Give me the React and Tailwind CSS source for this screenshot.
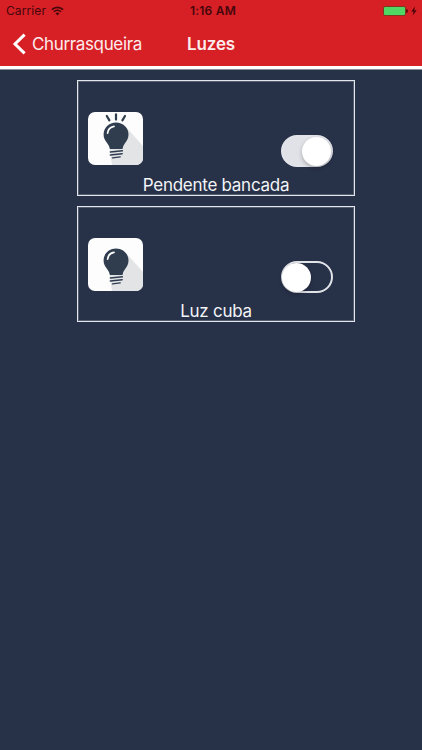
import React, { useState } from 'react';

const initialLights = [
  { id: 'bancada', name: 'Pendente bancada', on: true },
  { id: 'cuba', name: 'Luz cuba', on: false },
];

function WifiIcon() {
  return (
    <svg className="ml-[5px] w-[13px] h-[10px]" viewBox="0 0 13 10" fill="none">
      <path d="M0.9 3.6 A8 8 0 0 1 12.1 3.6" stroke="#45070b" strokeWidth="1.7" />
      <path d="M2.9 5.8 A5.1 5.1 0 0 1 10.1 5.8" stroke="#45070b" strokeWidth="1.5" />
      <path d="M4.5 7.3 A3 3 0 0 1 8.5 7.3 L6.5 9.5 Z" fill="#45070b" />
    </svg>
  );
}

function StatusBar() {
  return (
    <div className="h-[22px] grid grid-cols-3 items-center text-[12px] text-[#45070b]">
      <div className="pl-[6px] flex items-center tracking-[0.1px]">
        Carrier
        <WifiIcon />
      </div>
      <div className="pl-[4px] text-center font-semibold tracking-[0.2px]">1:16 AM</div>
      <div className="pr-[5px] flex items-center justify-end">
        <div className="w-[23px] h-[10px] border border-[#7d3a20] rounded-[2px] bg-[#4fd964]" />
        <div className="w-[2px] h-[4px] rounded-r-full bg-[#5e0a0e]" />
        <svg className="ml-[3px] w-[6px] h-[10px]" viewBox="0 0 6 10">
          <path d="M4 0.5 L0.3 5.6 H2.6 L1.7 9.5 L5.7 4.2 H3.3 Z" fill="#45070b" />
        </svg>
      </div>
    </div>
  );
}

function NavBar() {
  return (
    <div className="h-11 grid grid-cols-[1fr_auto_1fr] items-center text-[17px] leading-[22px]">
      <button className="pl-[12px] pb-[1px] flex items-center text-[#fdecec]">
        <svg className="w-[14px] h-[22px]" viewBox="0 0 14 22" fill="none">
          <path d="M12.6 1.6 L3 11 L12.6 20.4" stroke="#ffffff" strokeWidth="3" />
        </svg>
        <span className="ml-[6px] tracking-[-0.36px]">Churrasqueira</span>
      </button>
      <h1 className="pb-[1px] font-semibold text-[#fdecec] tracking-[-0.1px]">Luzes</h1>
      <div />
    </div>
  );
}

function BulbIcon({ on }) {
  return (
    <svg className="w-[55px] h-[53px] rounded-[7px] bg-[#fdfdfd]" viewBox="0 0 55 53">
      {/* long shadow */}
      <path d="M38.5 15.5 L55 34 V53 H24 L21.5 36 L30 30 Z" fill="#e2e4e6" />
      {on && (
        <g stroke="#2f3d4f" strokeWidth="2.2" strokeLinecap="round">
          <path d="M18.8 4 L21.4 8.4" />
          <path d="M28 2.4 V7.6" />
          <path d="M37 4 L34.4 8.4" />
        </g>
      )}
      <path
        d="M28 10.6 C21 10.6 15.6 15.8 15.6 22.4 C15.6 29.4 21 30.8 21.7 36.4 Q21.9 37.1 22.8 37.1 H33.6 Q34.5 37.1 34.7 36.4 C35.4 30.8 40.5 29.2 40.5 22.4 C40.5 15.8 35 10.6 28 10.6 Z"
        fill="#2f3d4f"
      />
      <path d="M19.6 21.2 C20 17.3 22.6 15 26 14.4" stroke="#fdfdfd" strokeWidth="1.7" strokeLinecap="round" fill="none" />
      <g stroke="#2f3d4f" strokeWidth="1.4" strokeLinecap="round">
        <path d="M22.3 40 L34.4 38.7" />
        <path d="M22.3 43 L34.2 41.7" />
        <path d="M24.5 45.9 L32.2 44.9" />
      </g>
    </svg>
  );
}

function Toggle({ on, onChange }) {
  return (
    <button
      role="switch"
      aria-checked={on}
      onClick={onChange}
      className={
        'w-[52px] h-[32px] flex items-center rounded-full border-2 border-[#e2e4e9] ' +
        (on ? 'justify-end bg-[#e0e2e7]' : 'justify-start')
      }
    >
      <span
        className={
          'w-[29px] h-[29px] shrink-0 rounded-full bg-white shadow-[0_2px_4px_rgba(0,0,0,0.25)] ' +
          (on ? '' : '-ml-px')
        }
      />
    </button>
  );
}

function LightCard({ light, onToggle }) {
  return (
    <div className="w-[278px] h-[116px] border border-[#e3e6ec] shadow-[inset_0_0_0_1px_rgba(227,230,236,0.25)] flex flex-col justify-end">
      <div className="pl-[10px] pr-[21px] flex items-end justify-between">
        <div className="pb-[2px]">
          <BulbIcon on={light.on} />
        </div>
        <Toggle on={light.on} onChange={onToggle} />
      </div>
      <div className="mt-[8px] h-[20px] text-center text-[17px] leading-[20px] tracking-[-0.27px] text-[#f3f4f7]">
        {light.name}
      </div>
    </div>
  );
}

export default function App() {
  const [lights, setLights] = useState(initialLights);

  const toggleLight = id => {
    setLights(prev => prev.map(l => (l.id === id ? { ...l, on: !l.on } : l)));
  };

  return (
    <div className="h-screen flex flex-col overflow-hidden bg-[#273148] font-['Inter','Liberation_Sans',sans-serif]">
      <header className="shrink-0 bg-[#d71f26] border-b-[3px] border-white">
        <StatusBar />
        <NavBar />
      </header>
      <div className="h-px shrink-0 bg-[#898d99]" />
      <main className="pt-[10px] flex flex-col items-center gap-[10px] pr-[6px] pl-[16px]">
        {lights.map(light => (
          <LightCard key={light.id} light={light} onToggle={() => toggleLight(light.id)} />
        ))}
      </main>
    </div>
  );
}
